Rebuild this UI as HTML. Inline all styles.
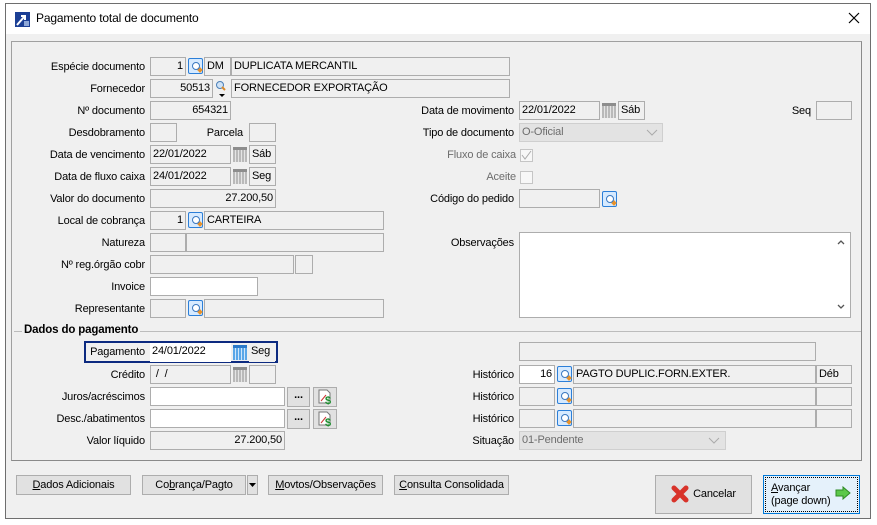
<!DOCTYPE html>
<html><head><meta charset="utf-8"><style>
*{box-sizing:border-box;margin:0;padding:0}
body{width:877px;height:525px;background:#fff;position:relative;overflow:hidden;font-family:Tahoma,"Liberation Sans","DejaVu Sans",sans-serif;font-size:11px;letter-spacing:-0.15px;color:#000}
.a{position:absolute}
.win{left:5px;top:3px;width:866px;height:516px;border:1px solid #6e6e6e;background:#f0f0f0}
.title{left:6px;top:4px;width:864px;height:30px;background:#fff}
.panel{left:11px;top:41px;width:851px;height:420px;border:1px solid #a0a0a0;border-right-color:#8a8a8a;border-bottom-color:#8a8a8a}
.l{position:absolute;text-align:right;white-space:nowrap;line-height:19px;height:19px}
.f{position:absolute;height:19px;border:1px solid #adadad;background:#f0f0f0;line-height:17px;padding:0 2px;white-space:nowrap;overflow:hidden}
.w{background:#fff}
.r{text-align:right}
.g{color:#6d6d6d}
.ic{position:absolute;width:15px;height:16px;border:1px solid #2c7fd8;background:#d6eaff;border-radius:2px}
.ic:after{content:"";position:absolute;left:3px;top:3px;width:6px;height:6px;border:1.5px solid #3a78c0;border-radius:50%;background:#fff}
.ic:before{content:"";position:absolute;left:9px;top:9px;width:4px;height:4px;background:#e8922a;transform:rotate(45deg)}
.cal{position:absolute;width:14px;height:15px;background:repeating-linear-gradient(90deg,#b9b9b9 0 2px,#e4e4e4 2px 3px);border-top:3px solid #8d8d8d}
.calb{background:repeating-linear-gradient(90deg,#5aa7e8 0 2px,#cfe6fb 2px 3px);border-top-color:#2b79c9}
.btn{position:absolute;height:20px;border:1px solid #adadad;background:#e1e1e1;text-align:center;line-height:18px;white-space:nowrap}
.cb{position:absolute;width:13px;height:13px;border:1px solid #c5c5c5;background:#f7f7f7}
</style></head><body>
<div class="a win"></div>
<div class="a title"></div>
<svg class="a" style="left:15px;top:12px" width="15" height="15"><rect width="15" height="15" fill="#1c3f95"/><path d="M2 13 L9 5 M6 4 H10 V8" stroke="#fff" stroke-width="2" fill="none"/><rect x="9" y="9" width="5" height="5" fill="#8fa8d8"/></svg>
<div class="a" style="left:36px;top:11px;font-size:12px">Pagamento total de documento</div>
<svg class="a" style="left:848px;top:12px" width="12" height="12"><path d="M1 1L11 11M11 1L1 11" stroke="#000" stroke-width="1.2"/></svg>
<div class="a panel"></div>

<div class="l" style="right:732px;top:58px">Espécie documento</div>
<div class="f r" style="left:150px;top:57px;width:36px">1</div><div class="ic" style="left:188px;top:58px"></div>
<div class="f" style="left:204px;top:57px;width:27px">DM</div><div class="f" style="left:231px;top:57px;width:279px">DUPLICATA MERCANTIL</div>

<div class="l" style="right:732px;top:80px">Fornecedor</div>
<div class="f r" style="left:150px;top:79px;width:63px">50513</div>
<svg class="a" style="left:215px;top:80px" width="13" height="18"><circle cx="5" cy="5" r="3.5" fill="#cfe2f5" stroke="#4a7fb8"/><path d="M7 7L10 10" stroke="#d98a2b" stroke-width="2"/><path d="M4 14H10L7 17Z" fill="#000"/></svg>
<div class="f" style="left:231px;top:79px;width:279px">FORNECEDOR EXPORTAÇÃO</div>

<div class="l" style="right:732px;top:102px">Nº documento</div>
<div class="f r" style="left:150px;top:101px;width:81px">654321</div>

<div class="l" style="right:732px;top:124px">Desdobramento</div>
<div class="f" style="left:150px;top:123px;width:27px"></div>
<div class="l" style="right:634px;top:124px">Parcela</div>
<div class="f" style="left:249px;top:123px;width:27px"></div>

<div class="l" style="right:732px;top:146px">Data de vencimento</div>
<div class="f" style="left:150px;top:145px;width:81px">22/01/2022</div><div class="cal" style="left:233px;top:147px"></div><div class="f" style="left:249px;top:145px;width:27px">Sáb</div>

<div class="l" style="right:732px;top:168px">Data de fluxo caixa</div>
<div class="f" style="left:150px;top:167px;width:81px">24/01/2022</div><div class="cal" style="left:233px;top:169px"></div><div class="f" style="left:249px;top:167px;width:27px">Seg</div>

<div class="l" style="right:732px;top:190px">Valor do documento</div>
<div class="f r" style="left:150px;top:189px;width:126px">27.200,50</div>

<div class="l" style="right:732px;top:212px">Local de cobrança</div>
<div class="f r" style="left:150px;top:211px;width:36px">1</div><div class="ic" style="left:188px;top:212px"></div><div class="f" style="left:204px;top:211px;width:180px">CARTEIRA</div>

<div class="l" style="right:732px;top:234px">Natureza</div>
<div class="f" style="left:150px;top:233px;width:36px"></div><div class="f" style="left:186px;top:233px;width:198px"></div>

<div class="l" style="right:732px;top:256px">Nº reg.órgão cobr</div>
<div class="f" style="left:150px;top:255px;width:144px"></div><div class="f" style="left:295px;top:255px;width:18px"></div>

<div class="l" style="right:732px;top:278px">Invoice</div>
<div class="f w" style="left:150px;top:277px;width:108px"></div>

<div class="l" style="right:732px;top:300px">Representante</div>
<div class="f" style="left:150px;top:299px;width:36px"></div><div class="ic" style="left:188px;top:300px"></div><div class="f" style="left:204px;top:299px;width:180px"></div>

<!-- right -->
<div class="l" style="right:363px;top:102px">Data de movimento</div>
<div class="f" style="left:519px;top:101px;width:81px">22/01/2022</div><div class="cal" style="left:602px;top:103px"></div><div class="f" style="left:618px;top:101px;width:27px">Sáb</div>
<div class="l" style="right:66px;top:102px">Seq</div>
<div class="f" style="left:816px;top:101px;width:36px"></div>

<div class="l" style="right:363px;top:124px">Tipo de documento</div>
<div class="f g" style="left:519px;top:123px;width:144px;background:#e3e3e3;border-color:#cfcfcf">O-Oficial</div>
<svg class="a" style="left:646px;top:129px" width="12" height="8"><path d="M1 1L6 6L11 1" stroke="#aaa" fill="none"/></svg>

<div class="l g" style="right:361px;top:146px">Fluxo de caixa</div>
<div class="cb" style="left:520px;top:149px"></div>
<svg class="a" style="left:521px;top:150px" width="11" height="11"><path d="M1 5L4 9L10 1" stroke="#aaa" fill="none"/></svg>
<div class="l g" style="right:361px;top:168px">Aceite</div>
<div class="cb" style="left:520px;top:171px"></div>

<div class="l" style="right:363px;top:190px">Código do pedido</div>
<div class="f" style="left:519px;top:189px;width:81px"></div><div class="ic" style="left:602px;top:191px"></div>

<div class="l" style="right:363px;top:234px">Observações</div>
<div class="f w" style="left:519px;top:232px;width:332px;height:86px"></div>
<svg class="a" style="left:836px;top:238px" width="10" height="74"><path d="M2 6L5 3L8 6M2 67L5 70L8 67" stroke="#555" stroke-width="1.3" fill="none"/></svg>

<!-- dados do pagamento -->
<div class="a" style="left:14px;top:331px;width:847px;height:1px;background:#bcbcbc"></div>
<div class="a" style="left:22px;top:324px;padding:0 2px;background:#f0f0f0;font-weight:bold;font-size:11.5px">Dados do pagamento</div>

<div class="a" style="left:84px;top:341px;width:194px;height:22px;border:2px solid #0c2a80"></div>
<div class="l" style="right:732px;top:343px">Pagamento</div>
<div class="f w" style="left:150px;top:343px;width:81px;border:none">24/01/2022</div><div class="cal calb" style="left:233px;top:345px"></div><div class="f" style="left:249px;top:343px;width:26px;border:none">Seg</div>

<div class="l" style="right:732px;top:366px">Crédito</div>
<div class="f" style="left:150px;top:365px;width:81px">&nbsp;/ &nbsp;/</div><div class="cal" style="left:233px;top:367px"></div><div class="f" style="left:249px;top:365px;width:27px"></div>

<div class="l" style="right:732px;top:388px">Juros/acréscimos</div>
<div class="f w" style="left:150px;top:387px;width:135px"></div>
<div class="btn" style="left:287px;top:387px;width:23px;line-height:14px;font-weight:bold">...</div>
<div class="btn" style="left:313px;top:387px;width:24px"></div>
<svg class="a" style="left:318px;top:389px" width="15" height="16"><path d="M1 1H9L12 4V14H1Z" fill="#fff" stroke="#777"/><path d="M3 12L8 6" stroke="#c33"/><text x="7" y="15" font-size="11" font-weight="bold" fill="#1c8a2c" font-family="Liberation Sans">$</text></svg>

<div class="l" style="right:732px;top:410px">Desc./abatimentos</div>
<div class="f w" style="left:150px;top:409px;width:135px"></div>
<div class="btn" style="left:287px;top:409px;width:23px;line-height:14px;font-weight:bold">...</div>
<div class="btn" style="left:313px;top:409px;width:24px"></div>
<svg class="a" style="left:318px;top:411px" width="15" height="16"><path d="M1 1H9L12 4V14H1Z" fill="#fff" stroke="#777"/><path d="M3 12L8 6" stroke="#c33"/><text x="7" y="15" font-size="11" font-weight="bold" fill="#1c8a2c" font-family="Liberation Sans">$</text></svg>

<div class="l" style="right:732px;top:432px">Valor líquido</div>
<div class="f r" style="left:150px;top:431px;width:135px">27.200,50</div>

<div class="f" style="left:519px;top:342px;width:297px"></div>
<div class="l" style="right:363px;top:366px">Histórico</div>
<div class="f w r" style="left:519px;top:365px;width:36px">16</div><div class="ic" style="left:557px;top:366px"></div><div class="f" style="left:573px;top:365px;width:243px">PAGTO DUPLIC.FORN.EXTER.</div><div class="f" style="left:816px;top:365px;width:36px">Déb</div>
<div class="l" style="right:363px;top:388px">Histórico</div>
<div class="f" style="left:519px;top:387px;width:36px"></div><div class="ic" style="left:557px;top:388px"></div><div class="f" style="left:573px;top:387px;width:243px"></div><div class="f" style="left:816px;top:387px;width:36px"></div>
<div class="l" style="right:363px;top:410px">Histórico</div>
<div class="f" style="left:519px;top:409px;width:36px"></div><div class="ic" style="left:557px;top:410px"></div><div class="f" style="left:573px;top:409px;width:243px"></div><div class="f" style="left:816px;top:409px;width:36px"></div>
<div class="l" style="right:363px;top:432px">Situação</div>
<div class="f g" style="left:519px;top:431px;width:207px;background:#e3e3e3;border-color:#cfcfcf">01-Pendente</div>
<svg class="a" style="left:708px;top:437px" width="12" height="8"><path d="M1 1L6 6L11 1" stroke="#aaa" fill="none"/></svg>

<!-- buttons -->
<div class="btn" style="left:16px;top:475px;width:115px"><u>D</u>ados Adicionais</div>
<div class="btn" style="left:142px;top:475px;width:104px">Co<u>b</u>rança/Pagto</div>
<div class="btn" style="left:247px;top:475px;width:11px"></div>
<svg class="a" style="left:249px;top:483px" width="7" height="4"><path d="M0 0H7L3.5 4Z"/></svg>
<div class="btn" style="left:268px;top:475px;width:115px"><u>M</u>ovtos/Observações</div>
<div class="btn" style="left:394px;top:475px;width:115px"><u>C</u>onsulta Consolidada</div>
<div class="btn" style="left:655px;top:475px;width:97px;height:39px;line-height:37px;padding-left:22px">Cancelar</div>
<svg class="a" style="left:671px;top:485px" width="18" height="18"><path d="M3 3L15 15M15 3L3 15" stroke="#d8332a" stroke-width="5" stroke-linecap="round"/></svg>
<div class="btn" style="left:763px;top:475px;width:97px;height:39px;background:#e5f1fb;border-color:#0078d7;text-align:left;line-height:13px;padding:6px 0 0 7px;outline:1px dotted #000;outline-offset:-3px"><u>A</u>vançar<br>(page down)</div>
<svg class="a" style="left:835px;top:486px" width="16" height="14"><path d="M1 4H8V1L15 7L8 13V10H1Z" fill="#5cc84a" stroke="#2f8a25"/></svg>
</body></html>
